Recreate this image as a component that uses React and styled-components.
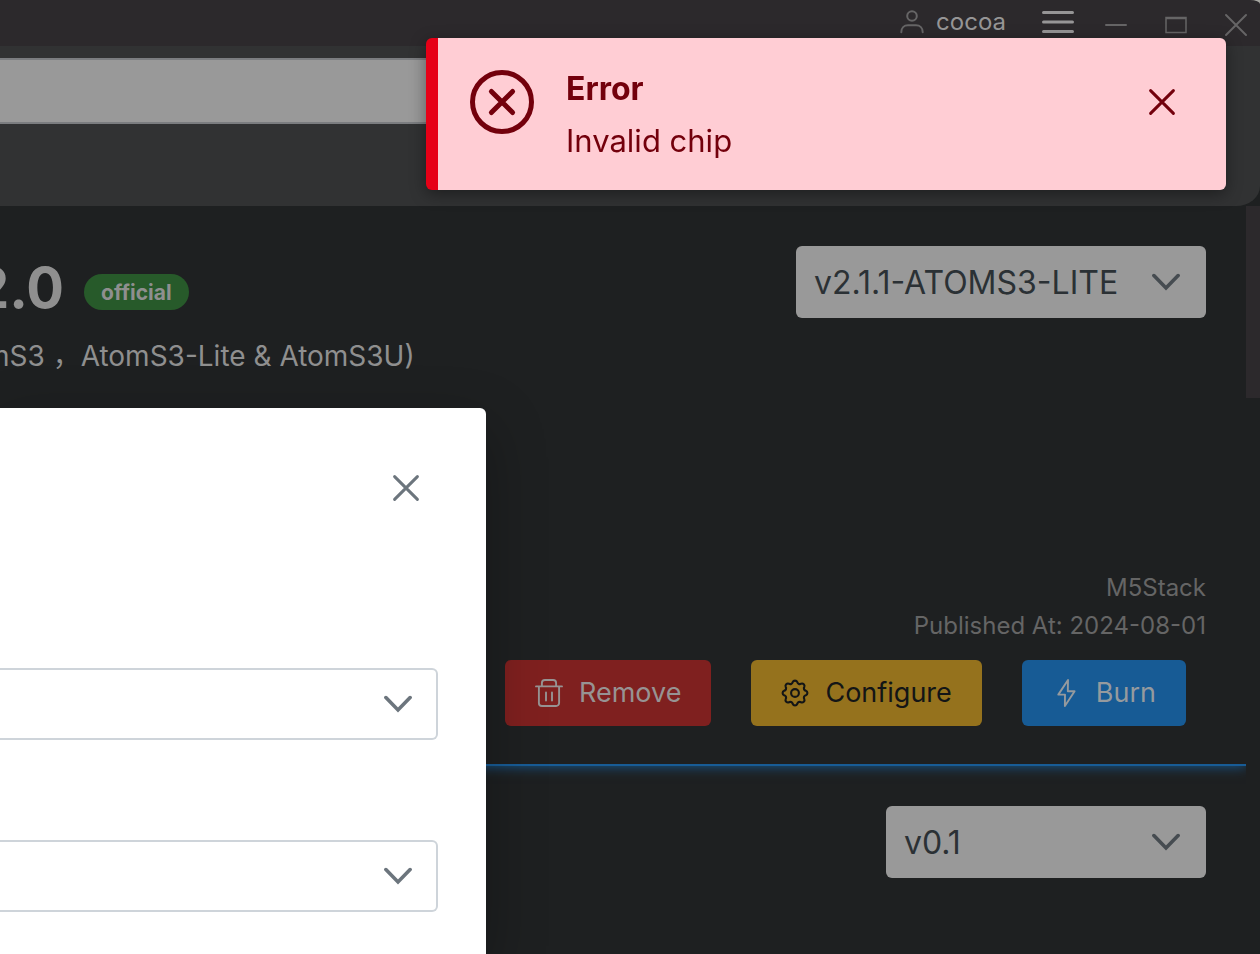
import React from "react";
import styled, { createGlobalStyle } from "styled-components";

const GlobalStyle = createGlobalStyle`
  * { box-sizing: border-box; }
  html, body, #root { height: 100%; }
  body {
    margin: 0;
    overflow: hidden;
    background: #a5a5a0;
    font-family: Inter, "Noto Sans CJK SC", sans-serif;
    color: #8f8f8f;
  }
  button, select, input { font-family: inherit; margin: 0; }
  svg { display: block; flex: none; }
`;

const Window = styled.div`
  min-height: 100%;
  display: flex;
  flex-direction: column;
`;

const TitleBar = styled.header`
  height: 46px;
  display: flex;
  align-items: center;
  justify-content: flex-end;
  padding: 0 12px 2px 0;
  background: #2c292c;
  border-top-right-radius: 10px 4px;
`;

const PlainButton = styled.button`
  display: flex;
  align-items: center;
  padding: 0;
  border: 0;
  background: none;
  color: ${(p) => p.$color || "#666566"};
`;

const Account = styled(PlainButton)`
  gap: 12px;
  margin-right: 36px;
  font-size: 24px;
  line-height: 30px;
`;

const AccountName = styled.span`
  color: #969596;
`;

const WindowControls = styled.div`
  display: flex;
  gap: 36px;
  margin-left: 30px;
  padding-top: 6px;
`;

const HeaderBack = styled.div`
  background: #1e2021;
`;

const SearchHeader = styled.div`
  height: 160px;
  padding: 12px 320px 0 0;
  background: #313233;
  border-bottom-right-radius: 24px 20px;
`;

const SearchInput = styled.input`
  display: block;
  width: 100%;
  height: 66px;
  border: 2px solid #7b7d80;
  border-left: 0;
  border-radius: 0 6px 6px 0;
  background: #999999;
`;

const Main = styled.main`
  flex: 1;
  display: flex;
  background: #1e2021;
`;

const CardList = styled.div`
  flex: 1;
  min-width: 0;
  overflow: hidden;
`;

const ScrollTrack = styled.div`
  width: 14px;
`;

const ScrollThumb = styled.div`
  height: 192px;
  background: #2c292c;
`;

const Card = styled.section`
  min-height: 560px;
  display: flex;
  flex-direction: column;
  justify-content: space-between;
  padding: 40px 40px 38px 0;
  border-bottom: 2px solid #185c96;
  box-shadow: 0 0 12px #185c96;
`;

const CardTop = styled.div`
  display: flex;
  align-items: flex-start;
  justify-content: space-between;
`;

const Intro = styled.div`
  white-space: nowrap;
`;

const TitleRow = styled.div`
  display: flex;
  align-items: center;
  gap: 20px;
  height: 84px;
  margin-left: -26px;
`;

const Title = styled.h2`
  margin: 0;
  font-size: 56px;
  line-height: 84px;
  font-weight: 700;
`;

const Tag = styled.span`
  height: 36px;
  margin-top: 8px;
  padding: 0 17px;
  border-radius: 18px;
  background: #275a2a;
  font-size: 21px;
  line-height: 37px;
  font-weight: 700;
`;

const Description = styled.p`
  margin: 6px 0 0 -15px;
  font-size: 28px;
  line-height: 40px;
`;

const SelectBox = styled.div`
  position: relative;
  width: ${(p) => p.$width};
  height: 72px;
  color: ${(p) => (p.$light ? "#6c757d" : "#464c51")};

  svg {
    position: absolute;
    right: 26px;
    top: 22px;
    pointer-events: none;
  }
`;

const SelectField = styled.select`
  appearance: none;
  width: 100%;
  height: 100%;
  padding: 0 80px 0 18px;
  border: ${(p) => (p.$light ? "2px solid #ced4da" : "0")};
  border-left: ${(p) => p.$light && "0"};
  border-radius: ${(p) => (p.$light ? "0 6px 6px 0" : "6px")};
  background: ${(p) => (p.$light ? "#ffffff" : "#999999")};
  color: #2b3135;
  font-size: 32px;
`;

const Meta = styled.div`
  margin-bottom: 15px;
  color: #656565;
  font-size: 24px;
  line-height: 38px;
  text-align: right;
`;

const Actions = styled.div`
  display: flex;
  justify-content: flex-end;
  gap: 40px;
  padding-right: 20px;
`;

const tones = {
  danger: ["#7f201f", "#979393"],
  warning: ["#95721d", "#131516"],
  primary: ["#175b95", "#959a9e"],
};

const ActionButton = styled.button`
  display: flex;
  align-items: center;
  gap: 16px;
  height: 66px;
  padding: 0 30px;
  border: 0;
  border-radius: 6px;
  background: ${(p) => tones[p.$tone][0]};
  color: ${(p) => tones[p.$tone][1]};
  font-size: 27px;
  line-height: 40px;
`;

const NextCard = styled.section`
  display: flex;
  justify-content: flex-end;
  padding: 40px 40px 40px 0;
`;

const Dialog = styled.div`
  position: fixed;
  left: 0;
  top: 408px;
  bottom: 0;
  width: 486px;
  padding: 0 48px 0 0;
  overflow: visible;
  border-top-right-radius: 6px;
  background: #ffffff;
  box-shadow: 0 20px 60px rgba(0, 0, 0, 0.3);
`;

const DialogHeader = styled.div`
  display: flex;
  justify-content: flex-end;
  padding: 66px 18px 0 0;
`;

const DialogFields = styled.div`
  display: flex;
  flex-direction: column;
  gap: 100px;
  padding-top: 166px;
`;

const Toast = styled.div`
  position: fixed;
  top: 38px;
  right: 34px;
  width: 800px;
  display: flex;
  align-items: flex-start;
  padding: 32px 50px 30px 32px;
  border-left: 12px solid #e60017;
  border-radius: 6px;
  background: #ffcdd4;
  color: #73000c;
  box-shadow: 0 4px 16px rgba(0, 0, 0, 0.4);
`;

const ToastText = styled.div`
  flex: 1;
  margin-left: 32px;
  line-height: 38px;
`;

const ToastTitle = styled.div`
  font-size: 32px;
  font-weight: 700;
`;

const ToastDetail = styled.div`
  margin-top: 14px;
  font-size: 31px;
`;

const ToastClose = styled(PlainButton)`
  margin-top: 18px;
`;

function Icon({ size = 28, stroke = 2, children }) {
  return (
    <svg
      width={size}
      height={size}
      viewBox={`0 0 ${size} ${size}`}
      fill="none"
      stroke="currentColor"
      strokeWidth={stroke}
      strokeLinecap="round"
      strokeLinejoin="round"
      aria-hidden="true"
    >
      {children}
    </svg>
  );
}

const CrossIcon = () => (
  <Icon stroke={3}>
    <path d="M2.6 2.6 25.4 25.4M25.4 2.6 2.6 25.4" />
  </Icon>
);

const ChevronIcon = () => (
  <Icon stroke={3.6}>
    <path d="M1.9 7.6 14 20 26.1 7.6" strokeLinejoin="miter" />
  </Icon>
);

// Eight rounded teeth, each joined to the next by a rounded notch.
const gearPath = (() => {
  const at = (deg) => {
    const a = (deg * Math.PI) / 180;
    return `${(14 + 11.1 * Math.cos(a)).toFixed(2)} ${(14 + 11.1 * Math.sin(a)).toFixed(2)}`;
  };
  let d = `M${at(-12)}`;
  for (let i = 0; i < 8; i += 1) {
    d += `A2.5 2.5 0 0 1 ${at(i * 45 + 12)}A2.4 2.4 0 0 0 ${at(i * 45 + 33)}`;
  }
  return `${d}Z`;
})();

function Dropdown({ label, value, width, light }) {
  return (
    <SelectBox $width={width} $light={light}>
      <SelectField aria-label={label} $light={light} defaultValue={value}>
        <option value={value}>{value}</option>
      </SelectField>
      <ChevronIcon />
    </SelectBox>
  );
}

export default function App() {
  return (
    <>
      <GlobalStyle />
      <Window>
        <TitleBar>
          <Account>
            <Icon size={24}>
              <circle cx="12" cy="6" r="4.8" />
              <path d="M1.3 22.2C1.3 18 4 15.3 8 15.3h8c4 0 6.7 2.7 6.7 6.9" />
            </Icon>
            <AccountName>cocoa</AccountName>
          </Account>
          <PlainButton aria-label="Menu" $color="#969596">
            <Icon size={32} stroke={3}>
              <path d="M1.5 6.5h29M1.5 16h29M1.5 25.5h29" />
            </Icon>
          </PlainButton>
          <WindowControls>
            <PlainButton aria-label="Minimize">
              <Icon size={24}>
                <path d="M2 12h20" />
              </Icon>
            </PlainButton>
            <PlainButton aria-label="Maximize">
              <Icon size={24} stroke={1.5}>
                <path d="M2 4.5h20v15H2zM2 5.5h20" strokeLinejoin="miter" />
              </Icon>
            </PlainButton>
            <PlainButton aria-label="Close window">
              <Icon size={24}>
                <path d="M2 2 22 22M22 2 2 22" />
              </Icon>
            </PlainButton>
          </WindowControls>
        </TitleBar>

        <HeaderBack>
          <SearchHeader>
            <SearchInput aria-label="Search" />
          </SearchHeader>
        </HeaderBack>

        <Main>
          <CardList>
            <Card>
              <CardTop>
                <Intro>
                  <TitleRow>
                    <Title>2.0</Title>
                    <Tag>official</Tag>
                  </TitleRow>
                  <Description>mS3 ，AtomS3-Lite &amp; AtomS3U)</Description>
                </Intro>
                <Dropdown label="Firmware version" value="v2.1.1-ATOMS3-LITE" width="410px" />
              </CardTop>
              <div>
                <Meta>
                  <div>M5Stack</div>
                  <div>Published At: 2024-08-01</div>
                </Meta>
                <Actions>
                  <ActionButton $tone="danger">
                    <Icon stroke={1.9}>
                      <path d="M1 7.4h26M3.9 7.4V24a3 3 0 0 0 3 3h14.2a3 3 0 0 0 3-3V7.4M6.9 7.4V4a3 3 0 0 1 3-3h8.2a3 3 0 0 1 3 3v3.4M11 13.5v8M17 13.5v8" />
                    </Icon>
                    Remove
                  </ActionButton>
                  <ActionButton $tone="warning">
                    <Icon stroke={2.1}>
                      <path d={gearPath} />
                      <circle cx="14" cy="14" r="3.9" />
                    </Icon>
                    Configure
                  </ActionButton>
                  <ActionButton $tone="primary">
                    <Icon stroke={1.9}>
                      <path d="M16 1 6.3 15.6H13L12.9 27 22.6 12.3H15.8Z" />
                    </Icon>
                    Burn
                  </ActionButton>
                </Actions>
              </div>
            </Card>
            <NextCard>
              <Dropdown label="Version" value="v0.1" width="320px" />
            </NextCard>
          </CardList>
          <ScrollTrack>
            <ScrollThumb />
          </ScrollTrack>
        </Main>
      </Window>

      <Dialog role="dialog" aria-label="Burn options">
        <DialogHeader>
          <PlainButton aria-label="Close" $color="#6c757d">
            <CrossIcon />
          </PlainButton>
        </DialogHeader>
        <DialogFields>
          <Dropdown label="Port" value="" width="100%" light />
          <Dropdown label="Baud rate" value="" width="100%" light />
        </DialogFields>
      </Dialog>

      <Toast role="alert">
        <Icon size={64} stroke={5}>
          <circle cx="32" cy="32" r="29.5" />
          <path d="M21.4 21.4 42.6 42.6M42.6 21.4 21.4 42.6" />
        </Icon>
        <ToastText>
          <ToastTitle>Error</ToastTitle>
          <ToastDetail>Invalid chip</ToastDetail>
        </ToastText>
        <ToastClose aria-label="Dismiss" $color="#73000c">
          <CrossIcon />
        </ToastClose>
      </Toast>
    </>
  );
}
